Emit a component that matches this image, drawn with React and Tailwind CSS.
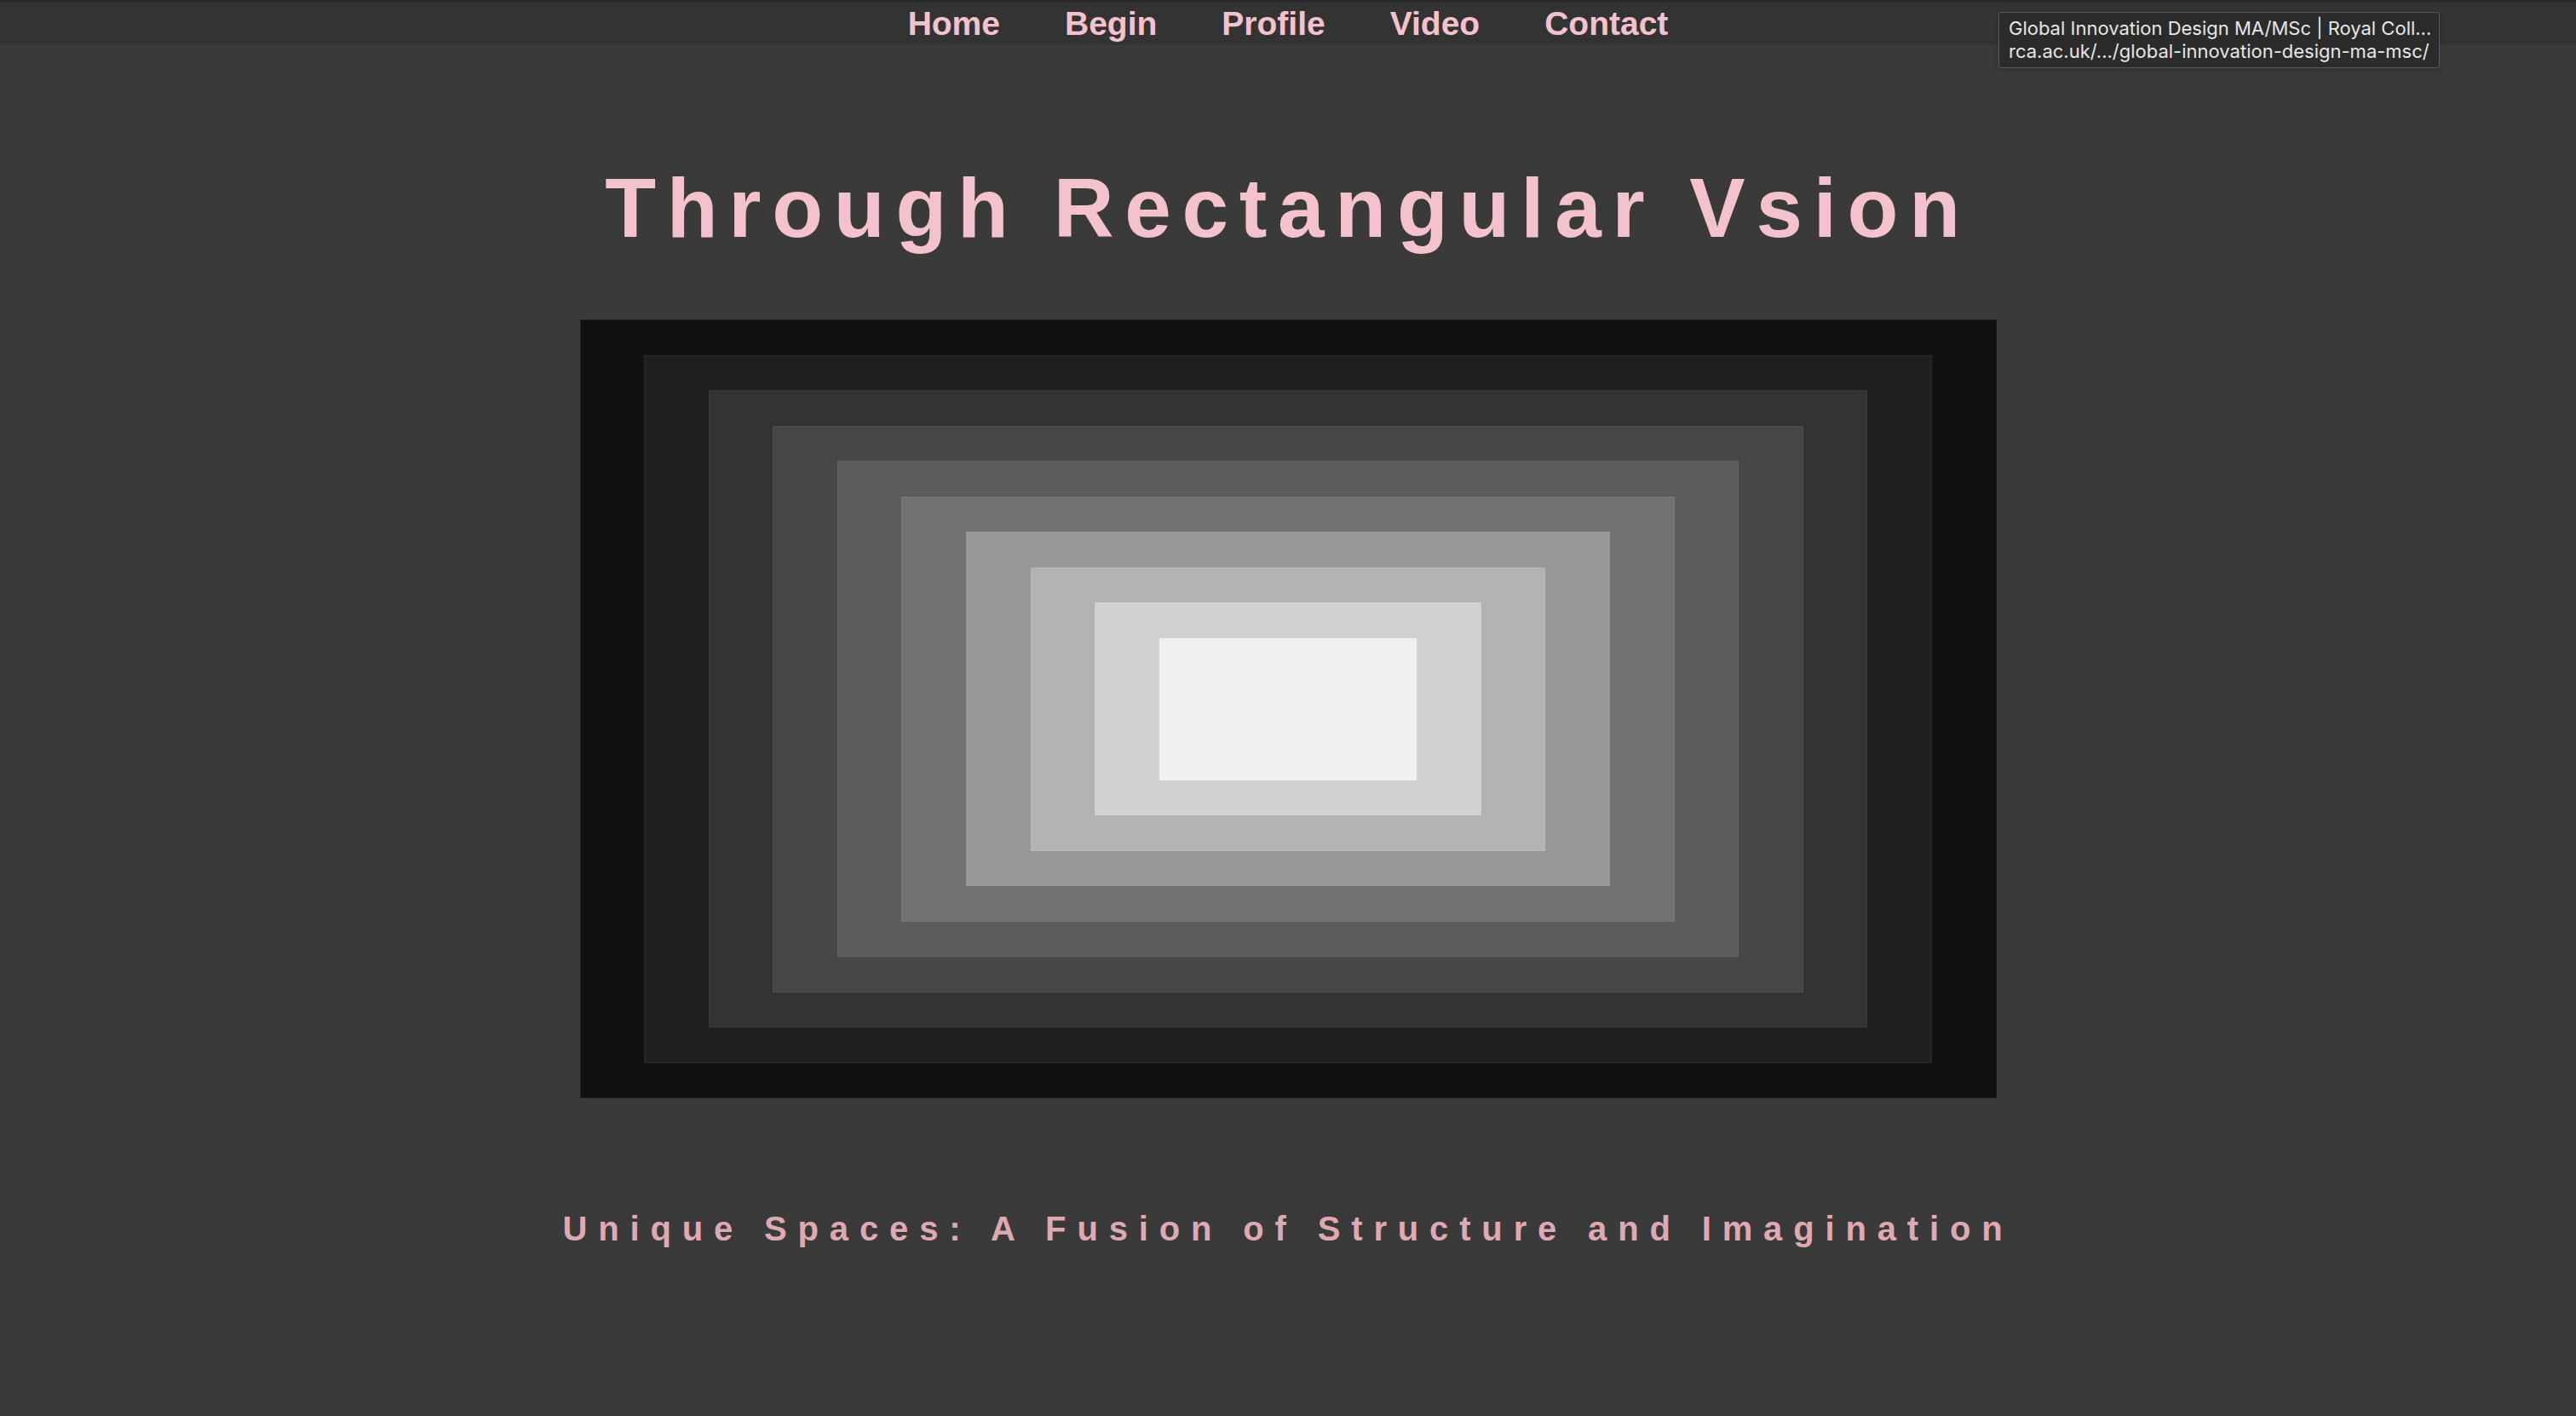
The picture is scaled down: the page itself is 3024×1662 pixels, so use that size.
import React from "react";

const frames = [
  "bg-[#111111]",
  "bg-[#202020]",
  "bg-[#333333]",
  "bg-[#474747]",
  "bg-[#5c5c5c]",
  "bg-[#717171]",
  "bg-[#979797]",
  "bg-[#b3b3b3]",
  "bg-[#d1d1d1]",
  "bg-[#f0f0f0]",
];

function Frame({ depth }) {
  const last = depth === frames.length - 1;
  return (
    <div
      className={`h-full w-full border border-white/5 ${frames[depth]} ${
        last ? "" : "px-[74.6px] py-[40.5px]"
      }`}
    >
      {!last && <Frame depth={depth + 1} />}
    </div>
  );
}

export default function App() {
  const links = ["Home", "Begin", "Profile", "Video", "Contact"];

  return (
    <div className="relative min-h-screen bg-[#3a3a3a] font-['Liberation_Sans',Arial,sans-serif]">
      <nav className="h-[53px] border-t-2 border-[#27272c] bg-[#333333] flex items-center justify-center gap-[76px]">
        {links.map((l) => (
          <a key={l} href="#" className="text-[39px] leading-none font-bold text-[#f4c2cc]">
            {l}
          </a>
        ))}
      </nav>

      <h1 className="mt-[142px] text-center text-[98px] leading-none font-bold tracking-[12.75px] text-[#f4c2cc]">
        Through Rectangular Vsion
      </h1>

      <div className="mx-auto mt-[82px] w-[1663px] h-[914px]">
        <Frame depth={0} />
      </div>

      <p className="mt-[133px] text-center text-[40px] leading-none font-bold tracking-[12.85px] text-[#dfa9b3]">
        Unique Spaces: A Fusion of Structure and Imagination
      </p>

      <div className="absolute left-[2346px] top-[14px] w-[518px] rounded-[3px] border border-[#595959] bg-[#2b2b2b] px-[11px] py-[5px] font-['Inter',sans-serif] text-[22px] leading-[27px] text-[#e6e6e6] shadow-md whitespace-nowrap">
        <div>Global Innovation Design MA/MSc | Royal Coll...</div>
        <div>rca.ac.uk/.../global-innovation-design-ma-msc/</div>
      </div>
    </div>
  );
}
